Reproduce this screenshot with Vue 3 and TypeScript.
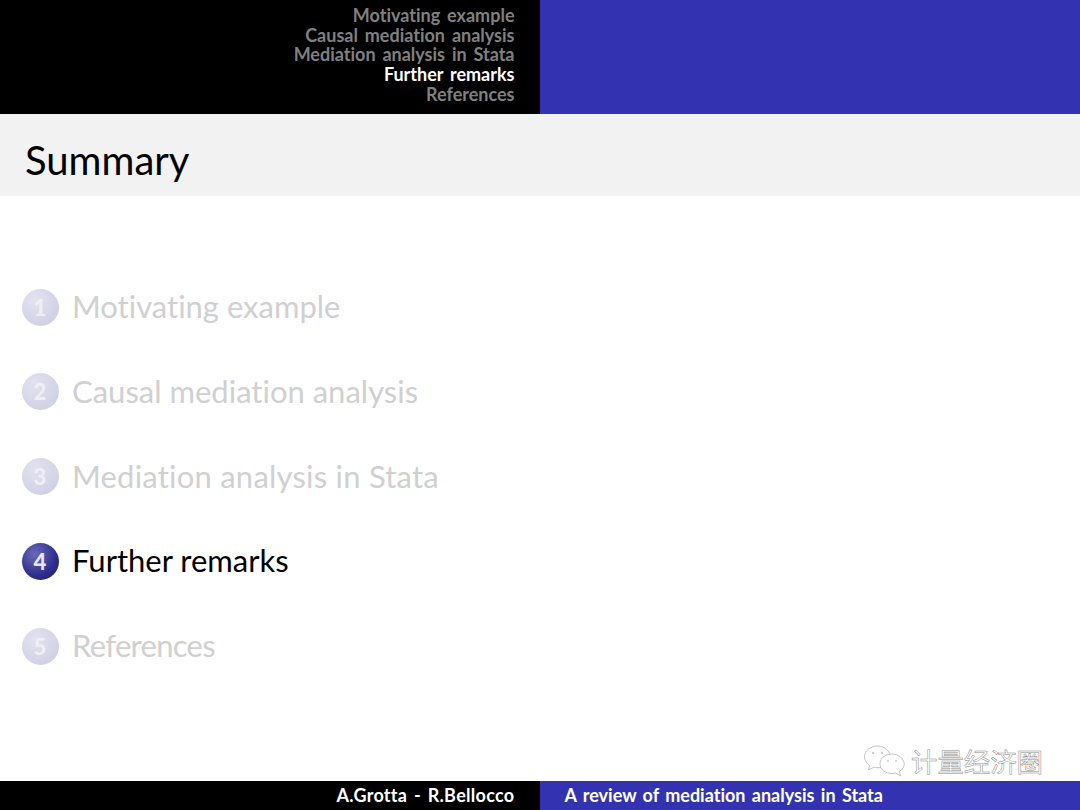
<script setup lang="ts">
interface Item { n: number; label: string; track: number; active?: boolean }
const items: Item[] = [
  { n: 1, label: 'Motivating example', track: 0 },
  { n: 2, label: 'Causal mediation analysis', track: 0 },
  { n: 3, label: 'Mediation analysis in Stata', track: 0.22 },
  { n: 4, label: 'Further remarks', track: 0 },
  { n: 5, label: 'References', track: -0.7 },
]
items[3].active = true
</script>

<template>
  <div class="slide">
    <header class="head">
      <nav class="head-nav">
        <div v-for="it in items" :key="it.n" class="nav-line" :class="{ on: it.active }">{{ it.label }}</div>
      </nav>
      <div class="head-blue"></div>
    </header>
    <div class="title-band"><h1 class="title">Summary</h1></div>
    <main class="body">
      <ol class="toc">
        <li v-for="it in items" :key="it.n" class="toc-row" :class="{ on: it.active }">
          <span class="ball">{{ it.n }}</span>
          <span class="toc-text" :style="{ letterSpacing: it.track + 'px' }">{{ it.label }}</span>
        </li>
      </ol>
      <div class="mark">
        <svg class="mark-icon" width="44" height="34" viewBox="0 0 44 34" fill="#fff" stroke="#c4c4c4" stroke-width="1">
          <path d="M15 2C7.5 2 1.5 6.8 1.5 12.8c0 3.5 2 6.5 5 8.4L5.6 26l5.2-2.8c1.3.3 2.7.5 4.2.5 5 0 10-2 12-6 3-6-3-15.7-12-15.7z" />
          <path d="M29 10c-6.8 0-12 4.3-12 9.8S22.2 29.5 29 29.5c1.3 0 2.5-.2 3.7-.5l4.8 3-1.200-4.600c3-1.800 5-4.600 5-7.600C40.300 14.300 35.800 10 29 10z" />
          <circle cx="10" cy="9" r="1.2" fill="#ccc" stroke="none" />
          <circle cx="19" cy="9" r="1.2" fill="#ccc" stroke="none" />
          <circle cx="25" cy="17" r="1" fill="#ccc" stroke="none" />
          <circle cx="33" cy="17" r="1" fill="#ccc" stroke="none" />
        </svg>
        <span class="mark-text">计量经济圈</span>
      </div>
    </main>
    <footer class="foot">
      <div class="foot-left">A.Grotta - R.Bellocco</div>
      <div class="foot-right">A review of mediation analysis in Stata</div>
    </footer>
  </div>
</template>

<style>
html, body { margin: 0; background: #fff; }
</style>

<style scoped>
.slide {
  width: 1080px;
  height: 810px;
  display: flex;
  flex-direction: column;
  overflow: hidden;
  font-family: Lato, "Noto Sans", sans-serif;
  font-variant-ligatures: none;
  background: #fff;
}
.head { display: flex; height: 113.5px; flex: none; }
.head-nav {
  width: 539.5px;
  box-sizing: border-box;
  background: #000;
  padding: 6px 25px 0 0;
  text-align: right;
  color: #808080;
  font-size: 18px;
  font-weight: 700;
  line-height: 19.7px;
  word-spacing: 2.5px;
}
.nav-line.on { color: #fff; }
.head-blue { flex: 1; background: #3333b2; }
.title-band {
  height: 82.5px;
  flex: none;
  box-sizing: border-box;
  background: #f2f2f2;
  padding: 19px 0 0 25px;
}
.title {
  margin: 0;
  font-size: 40px;
  font-weight: 400;
  line-height: 54px;
  color: #000;
}
.body { flex: 1; position: relative; }
.toc {
  list-style: none;
  margin: 0;
  padding: 93px 0 0 21.5px;
  display: flex;
  flex-direction: column;
  gap: 48.8px;
}
.toc-row {
  display: flex;
  align-items: center;
  gap: 13.5px;
  height: 36px;
  font-size: 31px;
  color: #d0d0d0;
}
.toc-row.on { color: #000; }
.toc-text { padding-bottom: 2px; }
.ball {
  width: 37px;
  height: 37px;
  flex: none;
  border-radius: 50%;
  display: flex;
  align-items: center;
  justify-content: center;
  font-size: 22px;
  font-weight: 900;
  color: #eeeef8;
  background: radial-gradient(circle at 35% 30%, #e2e2f0, #d2d2e6 70%, #c8c8de);
}
.toc-row.on .ball {
  color: #e6e6f4;
  background: radial-gradient(circle at 35% 30%, #6a6ab8, #2e2e8e 60%, #1c1c60);
}
.mark {
  position: absolute;
  left: 863px;
  top: 548px;
  display: flex;
  align-items: center;
  gap: 4px;
}
.mark-text {
  font-family: "Noto Sans CJK SC", sans-serif;
  font-size: 26.4px;
  line-height: 34px;
  color: #fff;
  -webkit-text-stroke: 0.5px #8a8a8a;
}
.foot { display: flex; height: 29px; flex: none; font-size: 18px; font-weight: 700; color: #fff; line-height: 29px; }
.foot-left { width: 539.5px; box-sizing: border-box; background: #000; text-align: right; padding-right: 25px; letter-spacing: 0.3px; word-spacing: 2px; }
.foot-right { flex: 1; background: #3333b2; padding-left: 25px; word-spacing: 2px; }
</style>
